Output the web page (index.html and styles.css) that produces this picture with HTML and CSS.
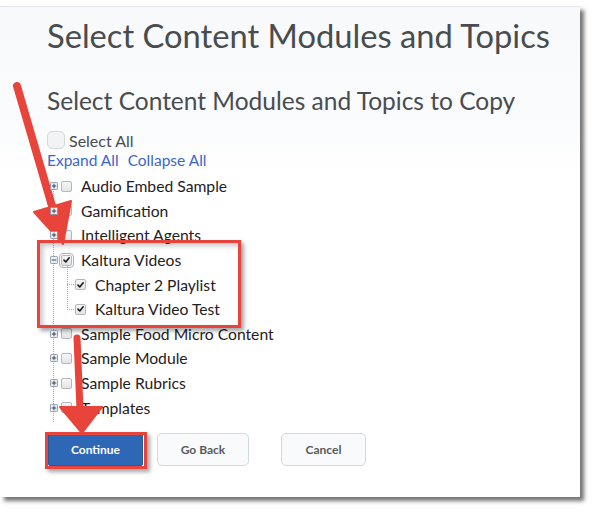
FILE: index.html
```html
<!DOCTYPE html>
<html>
<head>
<meta charset="utf-8">
<link rel="stylesheet" href="styles.css">
</head>
<body>
<div class="frame">
  <div class="page">
    <h1 class="title">Select Content Modules and Topics</h1>
    <h2 class="subtitle">Select Content Modules and Topics to Copy</h2>
    <label class="select-all"><span class="big-check"></span>Select All</label>
    <div class="links"><a class="link">Expand All</a><a class="link">Collapse All</a></div>
    <ul class="tree">
      <li class="row"><svg class="exp" viewBox="0 0 9 9"><rect x=".5" y=".5" width="8" height="8" rx="1"/><path d="M2 4.5h5M4.5 2v5"/></svg><span class="cb"></span><span class="label">Audio Embed Sample</span></li>
      <li class="row"><svg class="exp" viewBox="0 0 9 9"><rect x=".5" y=".5" width="8" height="8" rx="1"/><path d="M2 4.5h5M4.5 2v5"/></svg><span class="cb"></span><span class="label">Gamification</span></li>
      <li class="row"><svg class="exp" viewBox="0 0 9 9"><rect x=".5" y=".5" width="8" height="8" rx="1"/><path d="M2 4.5h5M4.5 2v5"/></svg><span class="cb"></span><span class="label">Intelligent Agents</span></li>
      <li class="group">
        <div class="row"><svg class="exp" viewBox="0 0 9 9"><rect x=".5" y=".5" width="8" height="8" rx="1"/><path d="M2 4.5h5"/></svg><span class="cb checked focus"><svg viewBox="0 0 10 10"><path d="M2.2 5.2l2 2 3.8-4.6"/></svg></span><span class="label">Kaltura Videos</span></div>
        <ul class="children">
          <li class="row child"><span class="cb checked"><svg viewBox="0 0 10 10"><path d="M2.2 5.2l2 2 3.8-4.6"/></svg></span><span class="label">Chapter 2 Playlist</span></li>
          <li class="row child"><span class="cb checked"><svg viewBox="0 0 10 10"><path d="M2.2 5.2l2 2 3.8-4.6"/></svg></span><span class="label">Kaltura Video Test</span></li>
        </ul>
      </li>
      <li class="row"><svg class="exp" viewBox="0 0 9 9"><rect x=".5" y=".5" width="8" height="8" rx="1"/><path d="M2 4.5h5M4.5 2v5"/></svg><span class="cb"></span><span class="label">Sample Food Micro Content</span></li>
      <li class="row"><svg class="exp" viewBox="0 0 9 9"><rect x=".5" y=".5" width="8" height="8" rx="1"/><path d="M2 4.5h5M4.5 2v5"/></svg><span class="cb"></span><span class="label">Sample Module</span></li>
      <li class="row"><svg class="exp" viewBox="0 0 9 9"><rect x=".5" y=".5" width="8" height="8" rx="1"/><path d="M2 4.5h5M4.5 2v5"/></svg><span class="cb"></span><span class="label">Sample Rubrics</span></li>
      <li class="row"><svg class="exp" viewBox="0 0 9 9"><rect x=".5" y=".5" width="8" height="8" rx="1"/><path d="M2 4.5h5M4.5 2v5"/></svg><span class="cb"></span><span class="label">Templates</span></li>
    </ul>
    <div class="buttons">
      <button class="btn primary">Continue</button>
      <button class="btn back">Go Back</button>
      <button class="btn cancel">Cancel</button>
    </div>
  </div>
  <div class="annot annot-tree"></div>
  <div class="annot annot-btn"></div>
</div>
<svg class="arrows" width="596" height="512" viewBox="0 0 596 512">
  <g fill="#e8443b" stroke="#e8443b" stroke-linecap="round" stroke-linejoin="round">
    <line x1="17" y1="86" x2="52" y2="206" stroke-width="8"/>
    <polygon points="34,212 71,201 63,244" stroke-width="2"/>
    <line x1="77" y1="338" x2="80" y2="410" stroke-width="7"/>
    <polygon points="60,407 102,407 82,433" stroke-width="2"/>
  </g>
</svg>
</body>
</html>
```
FILE: styles.css
```css
html, body {
  margin: 0;
  padding: 0;
  background: #ffffff;
}
body {
  width: 596px;
  height: 512px;
  overflow: hidden;
  position: relative;
  font-family: Lato, "Open Sans", sans-serif;
}
.frame {
  position: relative;
  margin-top: 6px;
  width: 580px;
  height: 490px;
  border-top: 1px solid #e3e6ea;
  background: linear-gradient(#f8f9fb 0px, #fafbfc 110px, #ffffff 170px);
  box-shadow: 4px 4px 4px rgba(0, 0, 0, 0.55);
}
.page {
  padding: 10px 0 0 47px;
}
.title {
  margin: 0;
  font-weight: 400;
  font-size: 32.7px;
  line-height: 38px;
  color: #494c4e;
  white-space: nowrap;
}
.subtitle {
  margin: 31px 0 0;
  font-weight: 400;
  font-size: 24.5px;
  line-height: 29px;
  color: #494c4e;
  white-space: nowrap;
}
.select-all {
  margin-top: 15px;
  display: flex;
  align-items: center;
  height: 20px;
  font-size: 16px;
  color: #494c4e;
}
.big-check {
  width: 16px;
  height: 16px;
  border: 1px solid #d3d9e3;
  border-radius: 5px;
  background: #f1f3f5;
  margin-right: 4px;
}
.links {
  display: flex;
  gap: 9px;
  font-size: 15.5px;
  line-height: 18px;
  height: 18px;
  margin-top: 1px;
}
.link {
  color: #3d66c8;
}
.tree {
  list-style: none;
  margin: 5px 0 0;
  padding: 0;
  position: relative;
}
.tree::before {
  content: "";
  position: absolute;
  left: 6px;
  top: 12px;
  height: 236px;
  border-left: 1px dotted #a9adb3;
}
.group {
  position: relative;
}
.children {
  list-style: none;
  margin: 0;
  padding: 0;
  position: relative;
}
.children::before {
  content: "";
  position: absolute;
  left: 20px;
  top: -6px;
  height: 42px;
  border-left: 1px dotted #a9adb3;
}
.row {
  display: flex;
  align-items: center;
  height: 24.6px;
  font-size: 15.7px;
  color: #1f2022;
}
.row.child {
  padding-left: 28px;
  position: relative;
}
.row.child::before {
  content: "";
  position: absolute;
  left: 20px;
  top: 12px;
  width: 7px;
  border-top: 1px dotted #a9adb3;
}
.exp {
  width: 8px;
  height: 8px;
  margin-left: 3px;
  margin-right: 3px;
  position: relative;
  z-index: 1;
}
.exp rect {
  fill: #e9edf3;
  stroke: #8592a6;
  stroke-width: 1;
}
.exp path {
  stroke: #3b4350;
  stroke-width: 1.1;
  fill: none;
}
.cb {
  box-sizing: border-box;
  width: 11px;
  height: 11px;
  border: 1px solid #b4b8bd;
  border-radius: 2px;
  background: linear-gradient(#f5f6f7, #e2e4e6);
  display: flex;
  align-items: center;
  justify-content: center;
  position: relative;
}
.cb svg {
  width: 10px;
  height: 10px;
}
.cb svg path {
  fill: none;
  stroke: #1d1d1f;
  stroke-width: 1.8;
  stroke-linecap: round;
  stroke-linejoin: round;
}
.cb.focus {
  outline: 1px solid #a8b0c4;
  outline-offset: 1px;
}
.label {
  margin-left: 9px;
  white-space: nowrap;
}
.buttons {
  display: flex;
  align-items: center;
  margin-top: 13px;
  margin-left: 1px;
}
.btn {
  font-family: Lato, "Open Sans", sans-serif;
  font-weight: 700;
  font-size: 12px;
  height: 33px;
  border-radius: 5px;
  padding: 0;
}
.primary {
  width: 95px;
  background: #2d67b6;
  border: 1px solid #245a9f;
  color: #ffffff;
  border-radius: 2px;
}
.back {
  width: 92px;
  margin-left: 14px;
  background: #f9fafb;
  border: 1px solid #d3d9e3;
  color: #565a5c;
}
.cancel {
  width: 85px;
  margin-left: 32px;
  background: #f9fafb;
  border: 1px solid #d3d9e3;
  color: #565a5c;
}
.annot {
  position: absolute;
  box-sizing: border-box;
  border: 3px solid #e8443b;
  box-shadow: 3px 3px 4px rgba(0, 0, 0, 0.35), inset 3px 3px 5px rgba(0, 0, 0, 0.22);
}
.annot-tree {
  left: 37px;
  top: 233px;
  width: 204px;
  height: 88px;
}
.annot-btn {
  left: 45px;
  top: 425px;
  width: 102px;
  height: 37px;
  box-shadow: 3px 3px 4px rgba(0, 0, 0, 0.35);
}
.arrows {
  position: absolute;
  left: 0;
  top: 0;
  pointer-events: none;
}
```
